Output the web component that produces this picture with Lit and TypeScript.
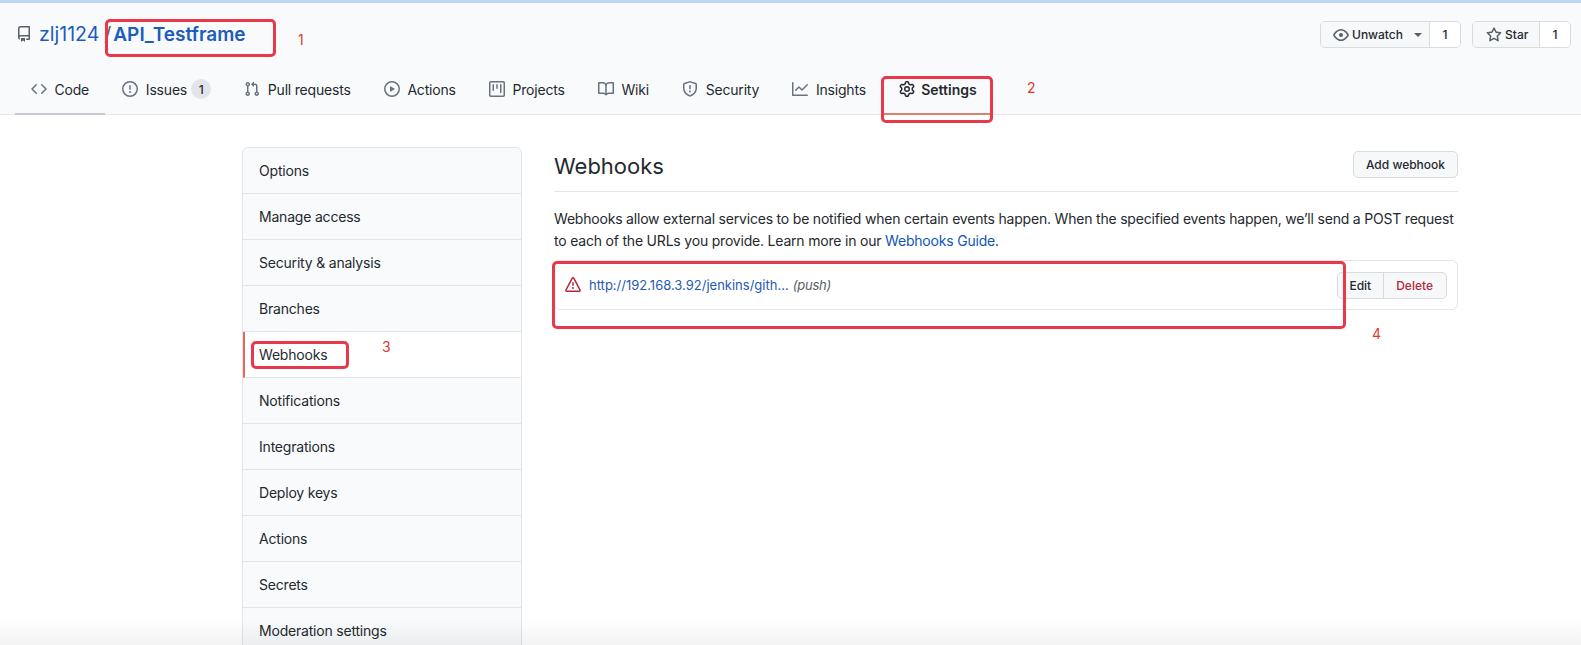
import { LitElement, css, html, svg } from 'lit';
import { customElement } from 'lit/decorators.js';

// octicon paths, 16x16 viewBox
const icons: Record<string, string> = {
  repo: 'M2 2.5A2.5 2.5 0 014.5 0h8.75a.75.75 0 01.75.75v12.5a.75.75 0 01-.75.75h-2.5a.75.75 0 110-1.5h1.75v-2h-8a1 1 0 00-.714 1.7.75.75 0 01-1.072 1.05A2.495 2.495 0 012 11.5v-9zm10.5-1V9h-8c-.356 0-.694.074-1 .208V2.5a1 1 0 011-1h8zM5 12.25v3.25a.25.25 0 00.4.2l1.45-1.087a.25.25 0 01.3 0L8.6 15.7a.25.25 0 00.4-.2v-3.25a.25.25 0 00-.25-.25h-3.5a.25.25 0 00-.25.25z',
  code: 'M4.72 3.22a.75.75 0 011.06 1.06L2.06 8l3.72 3.72a.75.75 0 11-1.06 1.06L.47 8.53a.75.75 0 010-1.06l4.25-4.25zm6.56 0a.75.75 0 10-1.06 1.06L13.94 8l-3.72 3.72a.75.75 0 101.06 1.06l4.25-4.25a.75.75 0 000-1.06l-4.25-4.25z',
  issue: 'M8 1.5a6.5 6.5 0 100 13 6.5 6.5 0 000-13zM0 8a8 8 0 1116 0A8 8 0 010 8zm9 3a1 1 0 11-2 0 1 1 0 012 0zm-.25-6.25a.75.75 0 00-1.5 0v3.5a.75.75 0 001.5 0v-3.5z',
  pull: 'M7.177 3.073L9.573.677A.25.25 0 0110 .854v4.792a.25.25 0 01-.427.177L7.177 3.427a.25.25 0 010-.354zM3.75 2.5a.75.75 0 100 1.5.75.75 0 000-1.5zm-2.25.75a2.25 2.25 0 113 2.122v5.256a2.251 2.251 0 11-1.5 0V5.372A2.25 2.25 0 011.5 3.25zM11 2.5h-1V4h1a1 1 0 011 1v5.628a2.251 2.251 0 101.5 0V5A2.5 2.5 0 0011 2.5zm1 10.25a.75.75 0 111.5 0 .75.75 0 01-1.5 0zM3.75 12a.75.75 0 100 1.5.75.75 0 000-1.5z',
  play: 'M1.5 8a6.5 6.5 0 1113 0 6.5 6.5 0 01-13 0zM8 0a8 8 0 100 16A8 8 0 008 0zM6.379 5.227A.25.25 0 006 5.442v5.117a.25.25 0 00.379.214l4.264-2.559a.25.25 0 000-.428L6.379 5.227z',
  project: 'M1.75 0A1.75 1.75 0 000 1.75v12.5C0 15.216.784 16 1.75 16h12.5A1.75 1.75 0 0016 14.25V1.75A1.75 1.75 0 0014.25 0H1.75zM1.5 1.75a.25.25 0 01.25-.25h12.5a.25.25 0 01.25.25v12.5a.25.25 0 01-.25.25H1.75a.25.25 0 01-.25-.25V1.75zM11.75 3a.75.75 0 00-.75.75v7.5a.75.75 0 001.5 0v-7.5a.75.75 0 00-.75-.75zm-8.25.75a.75.75 0 011.5 0v5.5a.75.75 0 01-1.5 0v-5.5zM8 3a.75.75 0 00-.75.75v3.5a.75.75 0 001.5 0v-3.5A.75.75 0 008 3z',
  book: 'M0 1.75A.75.75 0 01.75 1h4.253c1.227 0 2.317.59 3 1.501A3.744 3.744 0 0111.006 1h4.245a.75.75 0 01.75.75v10.5a.75.75 0 01-.75.75h-4.507a2.25 2.25 0 00-1.591.659l-.622.621a.75.75 0 01-1.06 0l-.622-.621A2.25 2.25 0 005.258 13H.75a.75.75 0 01-.75-.75V1.75zm8.755 3a2.25 2.25 0 012.25-2.25H14.5v9h-3.757c-.71 0-1.4.201-1.992.572l.004-7.322zm-1.504 7.324l.004-5.073-.002-2.253A2.25 2.25 0 005.003 2.5H1.5v9h3.757a3.75 3.75 0 011.994.574z',
  shield: 'M7.467.133a1.75 1.75 0 011.066 0l5.25 1.68A1.75 1.75 0 0115 3.48V7c0 1.566-.32 3.182-1.303 4.682-.983 1.498-2.585 2.813-5.032 3.855a1.7 1.7 0 01-1.33 0c-2.447-1.042-4.049-2.357-5.032-3.855C1.32 10.182 1 8.566 1 7V3.48a1.75 1.75 0 011.217-1.667l5.25-1.68zm.61 1.429a.25.25 0 00-.153 0l-5.25 1.68a.25.25 0 00-.174.238V7c0 1.358.275 2.666 1.057 3.86.784 1.194 2.121 2.34 4.366 3.297a.2.2 0 00.154 0c2.245-.956 3.582-2.104 4.366-3.298C13.225 9.666 13.5 8.36 13.5 7V3.48a.25.25 0 00-.174-.237l-5.25-1.68zM9 10.5a1 1 0 11-2 0 1 1 0 012 0zm-.25-5.75a.75.75 0 10-1.5 0v3a.75.75 0 001.5 0v-3z',
  graph: 'M1.5 1.75a.75.75 0 00-1.5 0v12.5c0 .414.336.75.75.75h14.5a.75.75 0 000-1.5H1.5V1.75zm14.28 2.53a.75.75 0 00-1.06-1.06L10 7.94 7.53 5.47a.75.75 0 00-1.06 0L3.22 8.72a.75.75 0 001.06 1.06L7 7.06l2.47 2.47a.75.75 0 001.06 0l5.25-5.25z',
  gear: 'M7.429 1.525a6.593 6.593 0 011.142 0c.036.003.108.036.137.146l.289 1.105c.147.56.55.967.997 1.189.174.086.341.183.501.29.417.278.97.423 1.53.27l1.102-.303c.11-.03.175.016.195.046.219.31.41.641.573.989.014.031.022.11-.059.19l-.815.806c-.411.406-.562.957-.53 1.456a4.588 4.588 0 010 .582c-.032.499.119 1.05.53 1.456l.815.806c.08.08.073.159.059.19a6.494 6.494 0 01-.573.99c-.02.029-.086.074-.195.045l-1.103-.303c-.559-.153-1.112-.008-1.529.27-.16.107-.327.204-.5.29-.449.222-.851.628-.998 1.189l-.289 1.105c-.029.11-.101.143-.137.146a6.613 6.613 0 01-1.142 0c-.036-.003-.108-.037-.137-.146l-.289-1.105c-.147-.56-.55-.967-.997-1.189a4.502 4.502 0 01-.501-.29c-.417-.278-.97-.423-1.53-.27l-1.102.303c-.11.03-.175-.016-.195-.046a6.492 6.492 0 01-.573-.989c-.014-.031-.022-.11.059-.19l.815-.806c.411-.406.562-.957.53-1.456a4.587 4.587 0 010-.582c.032-.499-.119-1.05-.53-1.456l-.815-.806c-.08-.08-.073-.159-.059-.19a6.44 6.44 0 01.573-.99c.02-.029.086-.075.195-.045l1.103.303c.559.153 1.112.008 1.529-.27.16-.107.327-.204.5-.29.449-.222.851-.628.998-1.189l.289-1.105c.029-.11.101-.143.137-.146zM8 0c-.236 0-.47.01-.701.03-.743.065-1.29.615-1.458 1.261l-.29 1.106c-.017.066-.078.158-.211.224a5.994 5.994 0 00-.668.386c-.123.082-.233.09-.3.071L3.27 2.776c-.644-.177-1.392.02-1.82.63a7.977 7.977 0 00-.704 1.217c-.315.675-.111 1.422.363 1.891l.815.806c.05.048.098.147.088.294a6.084 6.084 0 000 .772c.01.147-.038.246-.088.294l-.815.806c-.474.469-.678 1.216-.363 1.891.2.428.436.835.704 1.218.428.609 1.176.806 1.82.63l1.103-.303c.066-.019.176-.011.299.071.213.143.436.272.668.386.133.066.194.158.212.224l.289 1.106c.169.646.715 1.196 1.458 1.26a8.094 8.094 0 001.402 0c.743-.064 1.29-.614 1.458-1.26l.29-1.106c.017-.066.078-.158.211-.224a5.98 5.98 0 00.668-.386c.123-.082.233-.09.3-.071l1.102.302c.644.177 1.392-.02 1.82-.63.268-.382.505-.789.704-1.217.315-.675.111-1.422-.364-1.891l-.814-.806c-.05-.048-.098-.147-.088-.294a6.1 6.1 0 000-.772c-.01-.147.039-.246.088-.294l.814-.806c.475-.469.679-1.216.364-1.891a7.992 7.992 0 00-.704-1.218c-.428-.609-1.176-.806-1.82-.63l-1.103.303c-.066.019-.176.011-.299-.071a5.991 5.991 0 00-.668-.386c-.133-.066-.194-.158-.212-.224L10.16 1.29C9.99.645 9.444.095 8.701.031A8.094 8.094 0 008 0zm1.5 8a1.5 1.5 0 11-3 0 1.5 1.5 0 013 0zM11 8a3 3 0 11-6 0 3 3 0 016 0z',
  eye: 'M1.679 7.932c.412-.621 1.242-1.75 2.366-2.717C5.175 4.242 6.527 3.5 8 3.5c1.473 0 2.824.742 3.955 1.715 1.124.967 1.954 2.096 2.366 2.717a.119.119 0 010 .136c-.412.621-1.242 1.75-2.366 2.717C10.825 11.758 9.473 12.5 8 12.5c-1.473 0-2.824-.742-3.955-1.715C2.92 9.818 2.09 8.69 1.679 8.068a.119.119 0 010-.136zM8 2c-1.981 0-3.67.992-4.933 2.078C1.797 5.169.88 6.423.43 7.1a1.619 1.619 0 000 1.798c.45.678 1.367 1.932 2.637 3.024C4.329 13.008 6.019 14 8 14c1.981 0 3.67-.992 4.933-2.078 1.27-1.091 2.187-2.345 2.637-3.023a1.619 1.619 0 000-1.798c-.45-.678-1.367-1.932-2.637-3.023C11.671 2.992 9.981 2 8 2zm0 8a2 2 0 100-4 2 2 0 000 4z',
  star: 'M8 .25a.75.75 0 01.673.418l1.882 3.815 4.21.612a.75.75 0 01.416 1.279l-3.046 2.97.719 4.192a.75.75 0 01-1.088.791L8 12.347l-3.766 1.98a.75.75 0 01-1.088-.79l.72-4.194L.818 6.374a.75.75 0 01.416-1.28l4.21-.611L7.327.668A.75.75 0 018 .25zm0 2.445L6.615 5.5a.75.75 0 01-.564.41l-3.097.45 2.24 2.184a.75.75 0 01.216.664l-.528 3.084 2.769-1.456a.75.75 0 01.698 0l2.77 1.456-.53-3.084a.75.75 0 01.216-.664l2.24-2.183-3.096-.45a.75.75 0 01-.564-.41L8 2.694v.001z',
  alert: 'M8.22 1.754a.25.25 0 00-.44 0L1.698 13.132a.25.25 0 00.22.368h12.164a.25.25 0 00.22-.368L8.22 1.754zm-1.763-.707c.659-1.234 2.427-1.234 3.086 0l6.082 11.378A1.75 1.75 0 0114.082 15H1.918a1.75 1.75 0 01-1.543-2.575L6.457 1.047zM9 11a1 1 0 11-2 0 1 1 0 012 0zm-.25-5.25a.75.75 0 00-1.5 0v2.5a.75.75 0 001.5 0v-2.5z',
};

const icon = (name: string) =>
  html`<svg class="icon" viewBox="0 0 16 16" width="16" height="16" fill="currentColor">${svg`<path fill-rule="evenodd" d=${icons[name]}></path>`}</svg>`;

const tabs = [
  { label: 'Code', icon: 'code', selected: true },
  { label: 'Issues', icon: 'issue', counter: '1' },
  { label: 'Pull requests', icon: 'pull' },
  { label: 'Actions', icon: 'play' },
  { label: 'Projects', icon: 'project' },
  { label: 'Wiki', icon: 'book' },
  { label: 'Security', icon: 'shield' },
  { label: 'Insights', icon: 'graph' },
  { label: 'Settings', icon: 'gear', bold: true },
];

const menu = [
  'Options',
  'Manage access',
  'Security & analysis',
  'Branches',
  'Webhooks',
  'Notifications',
  'Integrations',
  'Deploy keys',
  'Actions',
  'Secrets',
  'Moderation settings',
];

@customElement('app-root')
export class AppRoot extends LitElement {
  static styles = css`
    :host {
      display: block;
      position: relative;
      height: 645px;
      overflow: hidden;
      background: #fff;
      color: #24292e;
      font-family: Inter, 'Liberation Sans', sans-serif;
      font-size: 14px;
      letter-spacing: -0.2px;
    }

    a {
      color: inherit;
      text-decoration: none;
    }

    .icon {
      flex: none;
      display: block;
    }

    .head {
      box-sizing: border-box;
      border-top: 3px solid #bcd6f3;
      height: 115px;
      background: #f9fafc;
      border-bottom: 1px solid #e4e6e9;
      display: flex;
      flex-direction: column;
    }

    .repo-row {
      height: 63px;
      padding: 18px 10px 0 16px;
      box-sizing: border-box;
      display: flex;
      justify-content: space-between;
      align-items: flex-start;
    }

    .title {
      display: flex;
      align-items: center;
      height: 25px;
      font-size: 19.5px;
      letter-spacing: 0;
      color: #1b5cc0;
    }

    .title .icon {
      color: #586069;
      margin-right: 7px;
    }

    .title .sep {
      color: #586069;
      margin: 0 2px 0 5px;
    }

    .title b {
      font-size: 19px;
      font-weight: 600;
    }

    .actions {
      display: flex;
      gap: 11px;
    }

    .social {
      display: flex;
      height: 27px;
      box-sizing: border-box;
      border: 1px solid #d8dbdf;
      border-radius: 5px;
      font-size: 12px;
      font-weight: 500;
      letter-spacing: 0;
      overflow: hidden;
    }

    .social .btn {
      display: flex;
      align-items: center;
      gap: 3px;
      background: #f6f8fa;
      border-right: 1px solid #d8dbdf;
      color: #24292e;
    }

    .social .btn .icon {
      color: #586069;
    }

    .watch {
      width: 109px;
      padding-left: 12px;
      box-sizing: border-box;
    }

    .stars {
      width: 67px;
      padding-left: 13px;
      box-sizing: border-box;
    }

    .caret {
      width: 0;
      height: 0;
      margin-left: 8px;
      border-top: 4px solid #586069;
      border-left: 4px solid transparent;
      border-right: 4px solid transparent;
    }

    .social .count {
      flex: 1;
      background: #fff;
      display: flex;
      align-items: center;
      justify-content: center;
    }

    .tabs {
      display: flex;
      padding-left: 15px;
      height: 48px;
    }

    .tab {
      display: flex;
      align-items: center;
      gap: 7.5px;
      padding: 0 16px;
      margin-right: 1.3px;
      box-sizing: border-box;
      height: 50px;
      margin-top: -1px;
      border-bottom: 2px solid transparent;
      color: #24292e;
    }

    .tab .icon {
      color: #6a737d;
    }

    .tab.selected {
      border-bottom-color: #c6c9cd;
    }

    .tab.bold {
      font-weight: 600;
      letter-spacing: 0;
      gap: 6px;
      border-bottom-color: #d9836f;
    }

    .tab.bold .icon {
      color: #24292e;
    }

    .counter {
      background: #e1e4e9;
      border-radius: 10px;
      min-width: 20px;
      height: 20px;
      margin-left: -3.5px;
      display: flex;
      align-items: center;
      justify-content: center;
      font-size: 12px;
      font-weight: 500;
    }

    .layout {
      display: grid;
      grid-template-columns: 280px 904px;
      gap: 32px;
      padding: 32px 0 0 242px;
    }

    .menu {
      border: 1px solid #e1e4e8;
      border-radius: 6px;
      background: #f9fafc;
      height: 540px;
      box-sizing: border-box;
    }

    .menu a {
      display: flex;
      align-items: center;
      box-sizing: border-box;
      height: 46px;
      padding-left: 16px;
      border-bottom: 1px solid #e1e4e8;
    }

    .menu a.active {
      background: #fff;
      border-left: 2px solid #e9685c;
      padding-left: 14px;
    }

    .subhead {
      display: flex;
      justify-content: space-between;
      align-items: flex-start;
      height: 45px;
      padding-top: 4px;
      box-sizing: border-box;
      border-bottom: 1px solid #e1e4e8;
    }

    h2 {
      margin: 0;
      font-size: 22px;
      font-weight: 400;
      line-height: 30px;
      letter-spacing: 0;
    }

    .add {
      height: 27px;
      width: 105px;
      box-sizing: border-box;
      display: flex;
      align-items: center;
      justify-content: center;
      border: 1px solid #d8dbdf;
      border-radius: 5px;
      background: #f6f8fa;
      font-size: 12px;
      font-weight: 500;
      letter-spacing: 0;
    }

    p {
      margin: 16px 0 0;
      line-height: 22px;
    }

    p a {
      color: #1155b5;
    }

    .hook {
      margin-top: 8px;
      height: 50px;
      box-sizing: border-box;
      border: 1px solid #e1e4e8;
      border-radius: 6px;
      padding: 0 10px;
      display: flex;
      align-items: center;
      font-size: 13px;
      letter-spacing: 0;
    }

    .hook .icon {
      color: #b5283c;
      margin-right: 8px;
    }

    .hook .url {
      color: #1f5bb5;
      margin-right: 4px;
    }

    .hook em {
      color: #586069;
      letter-spacing: -0.2px;
    }

    .hook-actions {
      margin-left: auto;
      display: flex;
      height: 27px;
      box-sizing: border-box;
      border: 1px solid #d8dbdf;
      border-radius: 5px;
      background: #f6f8fa;
      font-size: 12px;
      font-weight: 500;
    }

    .hook-actions span {
      display: flex;
      align-items: center;
      padding: 0 12px 0 11px;
    }

    .hook-actions .danger {
      color: #b5283c;
      padding: 0 13px 0 12px;
      border-left: 1px solid #d8dbdf;
    }

    /* annotations drawn over the screenshot */
    .mark {
      position: absolute;
      box-sizing: border-box;
      border: 3px solid #e8384a;
      border-radius: 5px;
    }

    .note {
      position: absolute;
      color: #e0392b;
      font-size: 14px;
      line-height: 16px;
    }

    .shade {
      position: absolute;
      left: 0;
      right: 0;
      bottom: 0;
      height: 26px;
      background: linear-gradient(rgba(0, 0, 0, 0), rgba(0, 0, 0, 0.05));
    }
  `;

  render() {
    return html`
      <div class="head">
        <div class="repo-row">
          <div class="title">
            ${icon('repo')}
            <a>zlj1124</a><span class="sep">/</span><a><b>API_Testframe</b></a>
          </div>
          <div class="actions">
            <div class="social" style="width: 141px">
              <a class="btn watch">${icon('eye')}Unwatch<span class="caret"></span></a>
              <span class="count">1</span>
            </div>
            <div class="social" style="width: 99px">
              <a class="btn stars">${icon('star')}Star</a>
              <span class="count">1</span>
            </div>
          </div>
        </div>
        <nav class="tabs">
          ${tabs.map(
            (t) => html`
              <a class="tab ${t.selected ? 'selected' : ''} ${t.bold ? 'bold' : ''}">
                ${icon(t.icon)}${t.label}
                ${t.counter ? html`<span class="counter">${t.counter}</span>` : ''}
              </a>
            `
          )}
        </nav>
      </div>

      <div class="layout">
        <aside class="menu">
          ${menu.map((m) => html`<a class=${m === 'Webhooks' ? 'active' : ''}>${m}</a>`)}
        </aside>
        <main>
          <div class="subhead">
            <h2>Webhooks</h2>
            <a class="add">Add webhook</a>
          </div>
          <p>
            Webhooks allow external services to be notified when certain events happen. When the specified events
            happen, we’ll send a POST request to each of the URLs you provide. Learn more in our
            <a>Webhooks Guide</a>.
          </p>
          <div class="hook">
            ${icon('alert')}
            <a class="url">http://192.168.3.92/jenkins/gith…</a>
            <em>(push)</em>
            <div class="hook-actions">
              <span>Edit</span>
              <span class="danger">Delete</span>
            </div>
          </div>
        </main>
      </div>

      <div class="mark" style="left: 105px; top: 19px; width: 171px; height: 38px"></div>
      <div class="mark" style="left: 881px; top: 76px; width: 112px; height: 47px"></div>
      <div class="mark" style="left: 251px; top: 341px; width: 98px; height: 28px"></div>
      <div class="mark" style="left: 552px; top: 261px; width: 794px; height: 68px"></div>
      <span class="note" style="left: 298px; top: 32px">1</span>
      <span class="note" style="left: 1027px; top: 80px">2</span>
      <span class="note" style="left: 382px; top: 339px">3</span>
      <span class="note" style="left: 1372px; top: 326px">4</span>
      <div class="shade"></div>
    `;
  }
}
